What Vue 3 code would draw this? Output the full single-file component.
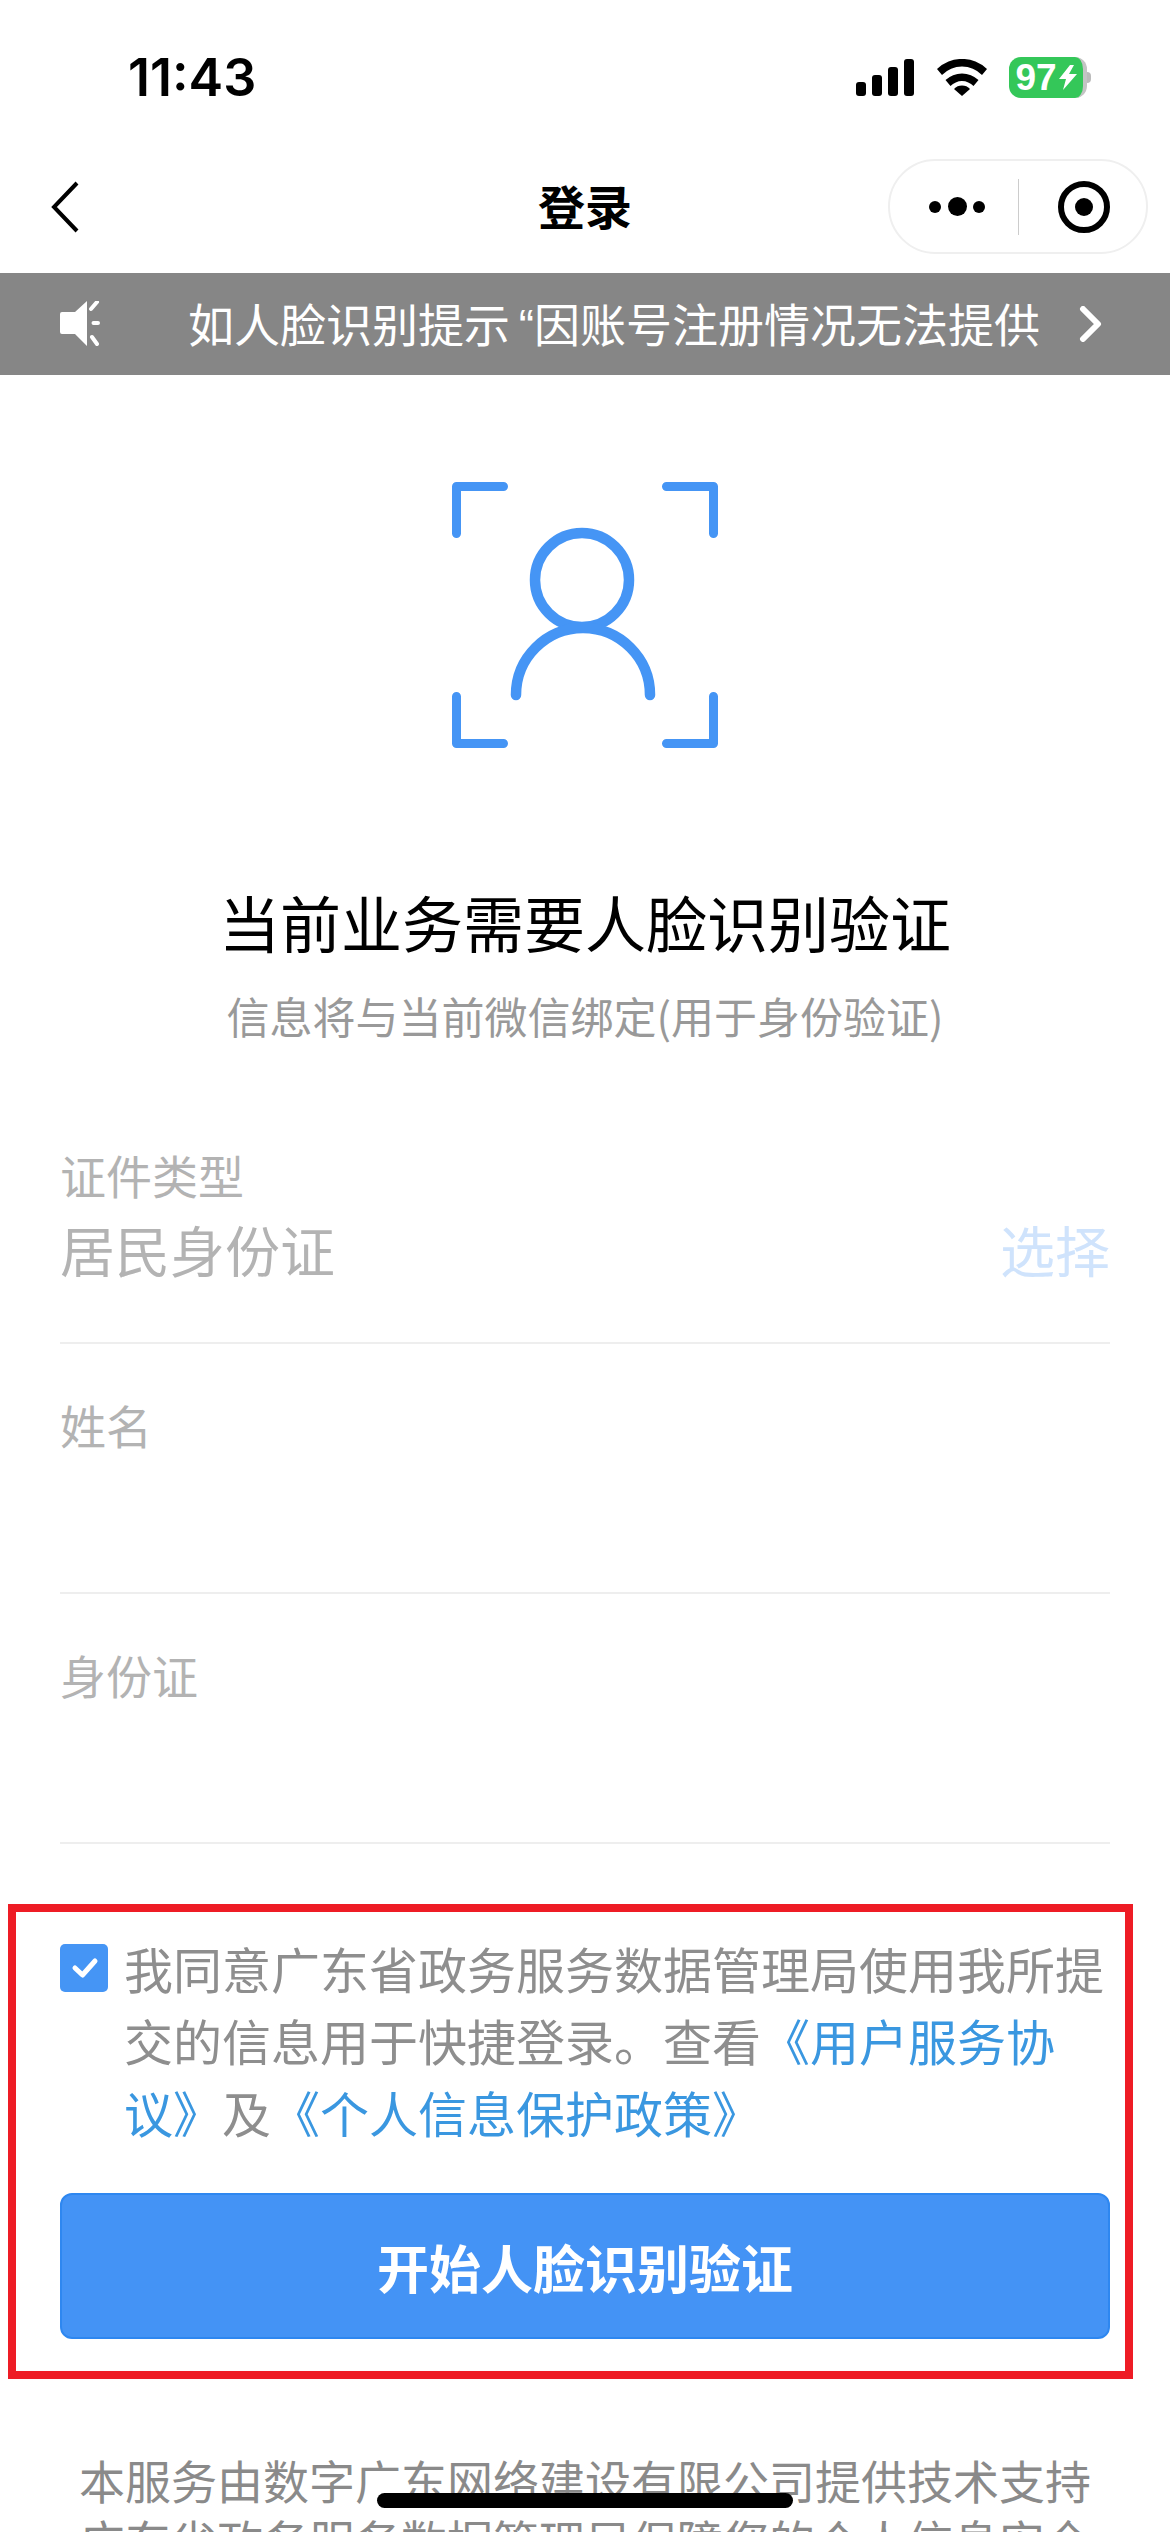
<script setup>
import { ref } from "vue";

const agreed = ref(true);
const fields = [
  { label: "证件类型", value: "居民身份证", action: "选择" },
  { label: "姓名", value: "" },
  { label: "身份证", value: "" }
];
</script>

<template>
  <div class="page">
    <div class="status-bar">
      <span class="time">11:43</span>
      <div class="status-icons">
        <div class="signal">
          <i class="b1"></i><i class="b2"></i><i class="b3"></i><i class="b4"></i>
        </div>
        <svg class="wifi" width="50" height="37" viewBox="0 0 50 37">
          <path d="M0 10 A36 36 0 0 1 50 10 L45 16 A28 28 0 0 0 5 16 Z" fill="#000" />
          <path d="M8.500 21 A24 24 0 0 1 41.500 21 L36.500 27 A16 16 0 0 0 13.500 27 Z" fill="#000" />
          <path d="M17 30 A11 11 0 0 1 33 30 L25 37 Z" fill="#000" />
        </svg>
        <div class="battery">
          <span class="battery-num">97</span>
          <svg width="19" height="25" viewBox="0 0 19 25">
            <path d="M12 0 L1 14 H8 L5 25 L19 9 H11 L16 0 Z" fill="#fff" />
          </svg>
        </div>
        <div class="battery-nub"></div>
      </div>
    </div>

    <div class="nav">
      <svg class="back" width="28" height="52" viewBox="0 0 28 52">
        <path d="M26 2 L3 26 L26 50" fill="none" stroke="#000" stroke-width="4" />
      </svg>
      <div class="title">登录</div>
      <div class="capsule">
        <div class="dots"><i></i><i class="big"></i><i></i></div>
        <div class="capsule-line"></div>
        <div class="target"><i></i></div>
      </div>
    </div>

    <div class="notice">
      <svg class="speaker" width="40" height="46" viewBox="0 0 40 46">
        <path d="M0 13 Q0 11 2 11 H15 L27 0 V45 L15 33 H2 Q0 33 0 31 Z" fill="#fff" />
        <path d="M31 8 L37 1 M33.500 22 H38 M32 36 L37 43" fill="none" stroke="#fff" stroke-width="4" stroke-linecap="round" />
      </svg>
      <div class="notice-text">如人脸识别提示<span class="quote">“</span>因账号注册情况无法提供</div>
      <svg class="notice-arrow" width="24" height="36" viewBox="0 0 24 36">
        <path d="M4 3 L19 18 L4 33" fill="none" stroke="#fff" stroke-width="6" stroke-linecap="round" stroke-linejoin="round" />
      </svg>
    </div>

    <div class="hero">
      <svg class="face" width="266" height="266" viewBox="0 0 266 266">
        <g fill="none" stroke="#4595f5" stroke-width="9" stroke-linecap="round" stroke-linejoin="round">
          <path d="M4.500 51.500 V4.500 H51.500" />
          <path d="M214.500 4.500 H261.500 V51.500" />
          <path d="M4.500 214.500 V261.500 H51.500" />
          <path d="M214.500 261.500 H261.500 V214.500" />
        </g>
        <circle cx="130" cy="98" r="47" fill="none" stroke="#4595f5" stroke-width="10.500" />
        <path d="M64 213 A67 67 0 0 1 198 213" fill="none" stroke="#4595f5" stroke-width="10.500" stroke-linecap="round" />
      </svg>
      <h1 class="heading">当前业务需要人脸识别验证</h1>
      <p class="sub">信息将与当前微信绑定(用于身份验证)</p>
    </div>

    <div class="form">
      <div v-for="f in fields" :key="f.label" class="field">
        <div class="field-label">{{ f.label }}</div>
        <div class="field-row">
          <span class="field-value">{{ f.value }}</span>
          <span v-if="f.action" class="field-action">{{ f.action }}</span>
        </div>
      </div>
    </div>

    <div class="agree-box">
      <div class="agree">
        <div class="check" :class="{ on: agreed }" @click="agreed = !agreed">
          <svg v-if="agreed" width="48" height="48" viewBox="0 0 48 48">
            <path d="M15 24 L22.500 31 L35 17" fill="none" stroke="#fff" stroke-width="5" stroke-linecap="round" stroke-linejoin="round" />
          </svg>
        </div>
        <div class="agree-text">我同意广东省政务服务数据管理局使用我所提交的信息用于快捷登录。查看<a>《用户服务协议》</a>及<a>《个人信息保护政策》</a></div>
      </div>
      <button class="start">开始人脸识别验证</button>
    </div>

    <div class="footer-text">本服务由数字广东网络建设有限公司提供技术支持<br>广东省政务服务数据管理局保障您的个人信息安全</div>

    <div class="home-bar"></div>
  </div>
</template>

<style scoped>
.page {
  position: relative;
  width: 1170px;
  height: 2532px;
  overflow: hidden;
  background: #fff;
  font-family: "Noto Sans CJK SC", "Liberation Sans", sans-serif;
  color: #000;
}

.status-bar {
  height: 158px;
  display: flex;
  justify-content: space-between;
  align-items: flex-start;
  box-sizing: border-box;
  padding: 49px 79px 0 128px;
}

.time {
  font-family: Inter, "Liberation Sans", sans-serif;
  font-size: 52px;
  line-height: 58px;
  font-weight: 600;
}

.status-icons {
  display: flex;
  align-items: center;
  margin-top: 8px;
}

.signal {
  display: flex;
  align-items: flex-end;
  gap: 6px;
  height: 37px;
}

.signal i {
  display: block;
  width: 10px;
  background: #000;
  border-radius: 3px;
}

.b1 { height: 14px; }
.b2 { height: 21px; }
.b3 { height: 29px; }
.b4 { height: 37px; }

.wifi {
  margin-left: 23px;
}

.battery {
  width: 78px;
  height: 41px;
  margin-left: 22px;
  box-sizing: border-box;
  background: #34c759;
  border-radius: 12px;
  border-right: 4px solid #c4c4c4;
  display: flex;
  align-items: center;
  justify-content: center;
  gap: 1px;
}

.battery-num {
  font-family: "Liberation Sans", sans-serif;
  font-size: 37px;
  line-height: 41px;
  font-weight: 700;
  color: #fff;
}

.battery-nub {
  width: 4px;
  height: 11px;
  background: #bbb;
  border-radius: 0 4px 4px 0;
}

.nav {
  height: 115px;
  display: flex;
  align-items: center;
  justify-content: space-between;
  position: relative;
  box-sizing: border-box;
  padding: 0 22px 18px 51px;
}

.title {
  position: absolute;
  left: 0;
  right: 0;
  top: 19px;
  text-align: center;
  font-size: 47px;
  line-height: 56px;
  font-weight: 700;
}

.capsule {
  width: 260px;
  height: 95px;
  box-sizing: border-box;
  border: 2px solid #efefef;
  border-radius: 48px;
  display: flex;
  align-items: center;
  padding-left: 39px;
}

.dots {
  width: 56px;
  display: flex;
  align-items: center;
  justify-content: space-between;
}

.dots i {
  display: block;
  width: 12px;
  height: 12px;
  border-radius: 50%;
  background: #000;
}

.dots i.big {
  width: 19px;
  height: 19px;
}

.capsule-line {
  width: 1px;
  height: 56px;
  margin-left: 33px;
  background: #ccc;
}

.target {
  width: 52px;
  height: 52px;
  margin-left: 39px;
  box-sizing: border-box;
  border: 6px solid #000;
  border-radius: 50%;
  display: flex;
  align-items: center;
  justify-content: center;
}

.target i {
  display: block;
  width: 18px;
  height: 18px;
  border-radius: 50%;
  background: #000;
}

.notice {
  height: 102px;
  background: #868686;
  display: flex;
  align-items: center;
  padding-left: 60px;
  box-sizing: border-box;
}

.notice-text {
  width: 853px;
  margin-left: 88px;
  white-space: nowrap;
  font-size: 46px;
  line-height: 60px;
  color: #fff;
}

.quote {
  display: inline-block;
  width: 24px;
  text-align: right;
  font-family: "Liberation Sans", sans-serif;
}

.notice-arrow {
  margin-left: 38px;
}

.hero {
  display: flex;
  flex-direction: column;
  align-items: center;
}

.face {
  margin-top: 107px;
}

.heading {
  margin: 134px 0 0;
  font-size: 61px;
  line-height: 80px;
  font-weight: 400;
  color: #000;
}

.sub {
  margin: 23px 0 0;
  font-size: 43px;
  line-height: 60px;
  color: #999;
}

.form {
  margin-top: 49px;
  padding: 0 60px;
}

.field {
  height: 250px;
  box-sizing: border-box;
  border-bottom: 2px solid #eee;
  padding-top: 52px;
}

.field-label {
  font-size: 46px;
  line-height: 56px;
  color: #b3b3b3;
}

.field-row {
  display: flex;
  justify-content: space-between;
  margin-top: 11px;
  height: 70px;
  font-size: 55px;
  line-height: 70px;
}

.field-value {
  color: #b3b3b3;
}

.field-action {
  color: #cfe3fc;
}

.agree-box {
  margin: 60px 37px 0 8px;
  height: 475px;
  box-sizing: border-box;
  border: 8px solid #ee1c25;
  padding: 32px 15px 32px 44px;
  display: flex;
  flex-direction: column;
}

.agree {
  display: flex;
  align-items: flex-start;
}

.check {
  width: 48px;
  height: 48px;
  flex: none;
  border-radius: 5px;
  background: #fff;
}

.check.on {
  background: #4595f5;
}

.check svg {
  display: block;
}

.agree-text {
  margin-left: 16px;
  font-size: 49px;
  line-height: 72px;
  margin-top: -12px;
  color: #8e8e8e;
}

.agree-text a {
  color: #3a97e0;
}

.start {
  margin-top: auto;
  height: 146px;
  box-sizing: border-box;
  border: 2px solid #2e87f0;
  border-radius: 12px;
  background: #4493f5;
  color: #fff;
  font-family: inherit;
  font-size: 52px;
  font-weight: 700;
}

.footer-text {
  margin-top: 70px;
  text-align: center;
  font-size: 46px;
  line-height: 60px;
  color: #8a8a8a;
}

.home-bar {
  position: absolute;
  left: 377px;
  bottom: 24px;
  width: 416px;
  height: 15px;
  border-radius: 8px;
  background: #000;
}
</style>
